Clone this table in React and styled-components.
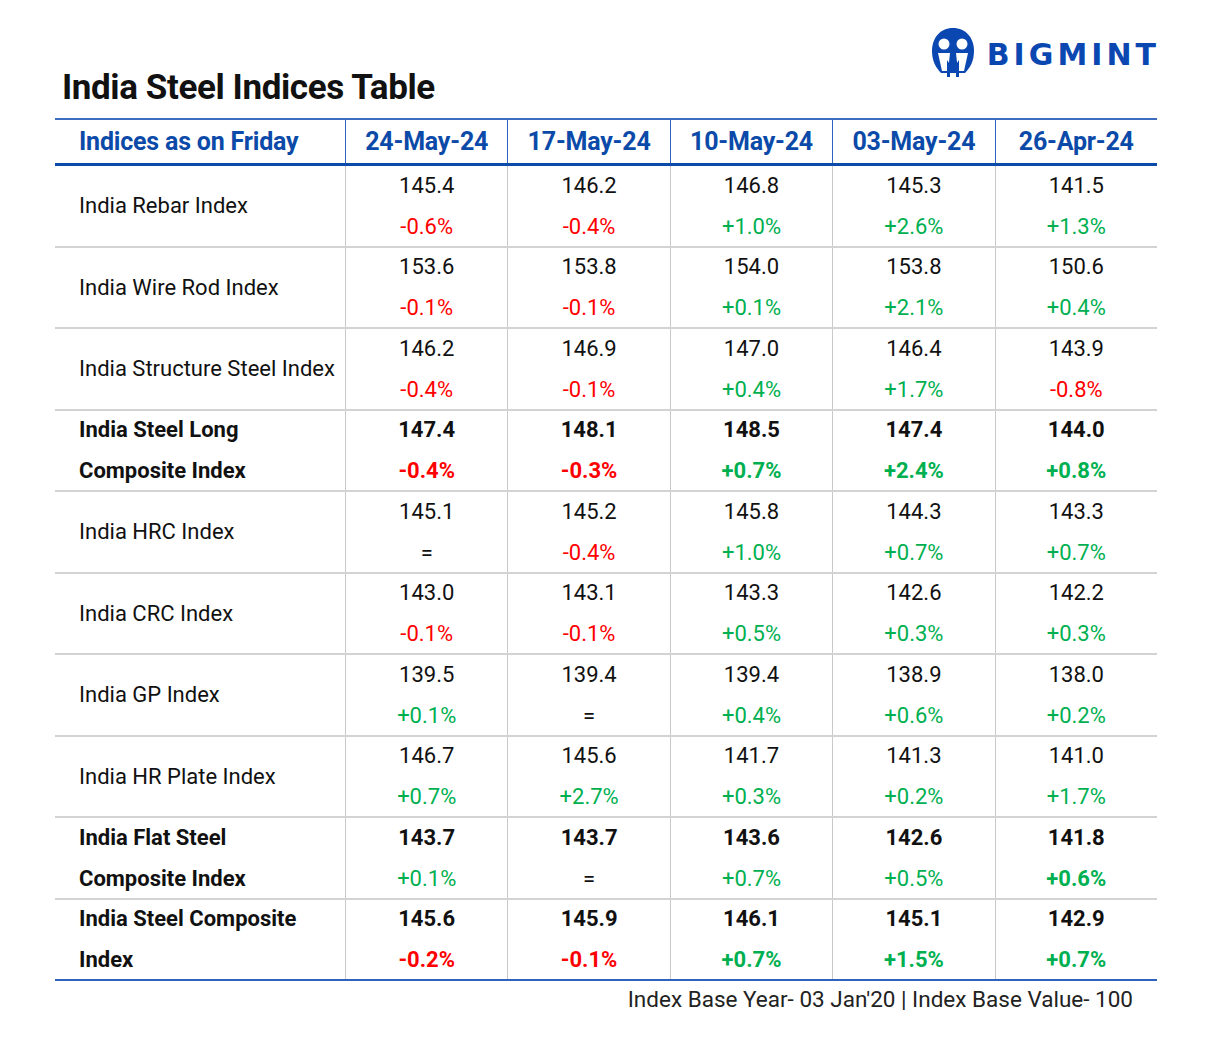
import styled, { createGlobalStyle } from "styled-components"

const GlobalStyle = createGlobalStyle`
    body {
        margin: 0;
        background: #ffffff;
        font-family: Roboto, "Liberation Sans", sans-serif;
        color: #111111;
    }
`

const columns = ["24-May-24", "17-May-24", "10-May-24", "03-May-24", "26-Apr-24"]

const rows = [
    { label: ["India Rebar Index"], values: ["145.4", "146.2", "146.8", "145.3", "141.5"], changes: ["-0.6%", "-0.4%", "+1.0%", "+2.6%", "+1.3%"] },
    { label: ["India Wire Rod Index"], values: ["153.6", "153.8", "154.0", "153.8", "150.6"], changes: ["-0.1%", "-0.1%", "+0.1%", "+2.1%", "+0.4%"] },
    { label: ["India Structure Steel Index"], values: ["146.2", "146.9", "147.0", "146.4", "143.9"], changes: ["-0.4%", "-0.1%", "+0.4%", "+1.7%", "-0.8%"] },
    { label: ["India Steel Long", "Composite Index"], bold: true, boldChange: [true, true, true, true, true], values: ["147.4", "148.1", "148.5", "147.4", "144.0"], changes: ["-0.4%", "-0.3%", "+0.7%", "+2.4%", "+0.8%"] },
    { label: ["India HRC Index"], values: ["145.1", "145.2", "145.8", "144.3", "143.3"], changes: ["=", "-0.4%", "+1.0%", "+0.7%", "+0.7%"] },
    { label: ["India CRC Index"], values: ["143.0", "143.1", "143.3", "142.6", "142.2"], changes: ["-0.1%", "-0.1%", "+0.5%", "+0.3%", "+0.3%"] },
    { label: ["India GP Index"], values: ["139.5", "139.4", "139.4", "138.9", "138.0"], changes: ["+0.1%", "=", "+0.4%", "+0.6%", "+0.2%"] },
    { label: ["India HR Plate Index"], values: ["146.7", "145.6", "141.7", "141.3", "141.0"], changes: ["+0.7%", "+2.7%", "+0.3%", "+0.2%", "+1.7%"] },
    { label: ["India Flat Steel", "Composite Index"], bold: true, boldChange: [false, false, false, false, true], values: ["143.7", "143.7", "143.6", "142.6", "141.8"], changes: ["+0.1%", "=", "+0.7%", "+0.5%", "+0.6%"] },
    { label: ["India Steel Composite", "Index"], bold: true, boldChange: [true, true, true, true, true], values: ["145.6", "145.9", "146.1", "145.1", "142.9"], changes: ["-0.2%", "-0.1%", "+0.7%", "+1.5%", "+0.7%"] },
]

function changeTone(c) {
    if (c.startsWith("-")) return "down"
    if (c.startsWith("+")) return "up"
    return "flat"
}

function Logo() {
    return (
        <LogoBox>
            <svg width="46" height="50" viewBox="0 0 46 50">
                <path d="M23 1 C10 1 2 11 2 24 C2 34 6 41 11 46 L35 46 C40 41 44 34 44 24 C44 11 36 1 23 1 Z" fill="#0b47b1" />
                <circle cx="14" cy="17" r="5.5" fill="#ffffff" />
                <circle cx="32" cy="17" r="5.5" fill="#ffffff" />
                <path d="M8 26 L20 26 L18 44 L12 44 Z" fill="#ffffff" />
                <path d="M26 26 L38 26 L34 44 L28 44 Z" fill="#ffffff" />
                <path d="M17 33 L23 42 L29 33 L29 46 L26 46 L26 40 L23 44 L20 40 L20 46 L17 46 Z" fill="#0b47b1" />
                <path d="M17 46 L20 46 L20 50 L17 50 Z M26 46 L29 46 L29 50 L26 50 Z" fill="#0b47b1" />
            </svg>
            <LogoText>BIGMINT</LogoText>
        </LogoBox>
    )
}

export default function App() {
    return (
        <>
            <GlobalStyle />
            <Page>
                <TopBar>
                    <Logo />
                </TopBar>
                <Title>India Steel Indices Table</Title>
                <Table>
                    <HeadRow>
                        <HeadCell $first>Indices as on Friday</HeadCell>
                        {columns.map(c => <HeadCell key={c}>{c}</HeadCell>)}
                    </HeadRow>
                    {rows.map((r, i) => (
                        <BodyRow key={i} $last={i === rows.length - 1}>
                            <LabelCell $bold={r.bold}>
                                {r.label.map(l => <span key={l}>{l}</span>)}
                            </LabelCell>
                            {r.values.map((v, j) => (
                                <ValueCell key={j}>
                                    <Value $bold={r.bold}>{v}</Value>
                                    <Change $tone={changeTone(r.changes[j])} $bold={r.boldChange && r.boldChange[j]}>
                                        {r.changes[j]}
                                    </Change>
                                </ValueCell>
                            ))}
                        </BodyRow>
                    ))}
                </Table>
                <Footer>Index Base Year- 03 Jan'20 | Index Base Value- 100</Footer>
            </Page>
        </>
    )
}

const Page = styled.div`
    width: 1102px;
    padding: 27px 0 0 55px;
`

const TopBar = styled.div`
    display: flex;
    justify-content: flex-end;
    height: 42px;
`

const LogoBox = styled.div`
    display: flex;
    align-items: center;
    gap: 11px;
    height: 50px;
    margin-right: -3px;
`

const LogoText = styled.span`
    font-family: "DejaVu Sans", "Liberation Sans", sans-serif;
    font-weight: 700;
    font-size: 30px;
    letter-spacing: 4px;
    color: #0b47b1;
    margin-top: 4px;
`

const Title = styled.h1`
    margin: 0 0 11px 7px;
    font-size: 35px;
    line-height: 38px;
    font-weight: 700;
    color: #111111;
    letter-spacing: -0.4px;
`

const Table = styled.div`
    border-top: 2px solid #3b6cc0;
`

const HeadRow = styled.div`
    display: grid;
    grid-template-columns: 290px repeat(5, 1fr);
    height: 43px;
    border-bottom: 3px solid #0b4aa8;
`

const HeadCell = styled.div`
    display: flex;
    align-items: center;
    justify-content: ${p => (p.$first ? "flex-start" : "center")};
    padding-left: ${p => (p.$first ? "24px" : "0")};
    border-left: ${p => (p.$first ? "none" : "1.5px solid #2f63bd")};
    color: #0b4aa8;
    font-weight: 700;
    font-size: 25px;
    letter-spacing: -0.2px;
`

const BodyRow = styled.div`
    display: grid;
    grid-template-columns: 290px repeat(5, 1fr);
    grid-template-rows: minmax(0, 1fr);
    height: 79.5px;
    border-bottom: 2px solid ${p => (p.$last ? "#2f63bd" : "#d3d3d3")};
`

const LabelCell = styled.div`
    display: flex;
    flex-direction: column;
    justify-content: center;
    min-height: 0;
    padding-left: 24px;
    font-size: 22px;
    line-height: 41px;
    font-weight: ${p => (p.$bold ? 700 : 400)};
    color: #111111;
`

const ValueCell = styled.div`
    display: flex;
    flex-direction: column;
    justify-content: center;
    align-items: center;
    min-height: 0;
    border-left: 1.5px solid #c9c9c9;
    font-size: 22px;
    line-height: 41px;
`

const Value = styled.span`
    font-weight: ${p => (p.$bold ? 700 : 400)};
    color: #111111;
`

const Change = styled.span`
    font-weight: ${p => (p.$bold ? 700 : 400)};
    color: ${p => (p.$tone === "down" ? "#ff0000" : p.$tone === "up" ? "#00b050" : "#111111")};
`

const Footer = styled.div`
    display: flex;
    justify-content: flex-end;
    padding-right: 24px;
    margin-top: 5px;
    font-size: 22.5px;
    color: #222222;
`
